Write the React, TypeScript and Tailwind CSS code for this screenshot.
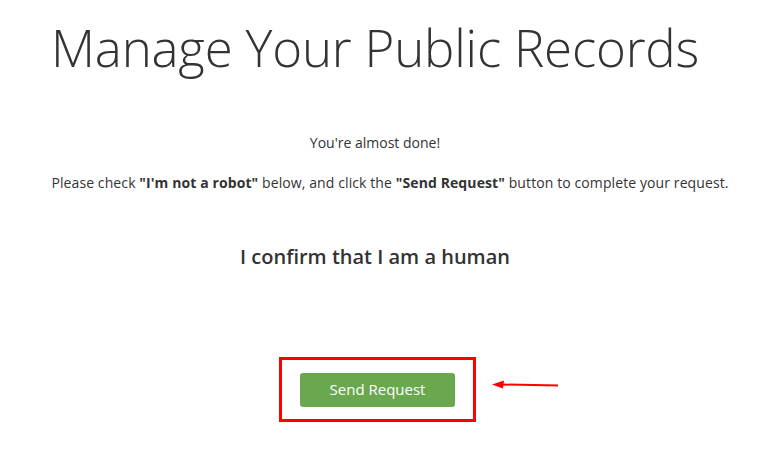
export default function App() {
  return (
    <div className="w-[750px] h-[452px] bg-white text-[#333] font-['Open_Sans',sans-serif] overflow-hidden">
      <div className="flex flex-col items-center text-center">
        {/* Titulo */}
        <h1 className="mt-[15px] text-[51px] leading-[64px] font-light tracking-[-0.2px] text-[#333]">
          Manage Your Public Records
        </h1>

        <p className="mt-[54px] text-[14px] leading-[20px]">You're almost done!</p>
        <p className="mt-[20px] pl-[30px] text-[14px] leading-[20px] tracking-[0.1px]">
          Please check <b>"I'm not a robot"</b> below, and click the <b>"Send Request"</b> button to complete your request.
        </p>

        <h3 className="mt-[50px] text-[20px] leading-[28px] font-semibold text-[#333]">I confirm that I am a human</h3>

        {/* Botão + destaque */}
        <div className="mt-[86px] ml-[5px] relative">
          <div className="w-[197px] h-[65px] border-[3px] border-[#ff0000] flex items-center justify-center">
            <button className="w-[155px] h-[34px] rounded-[3px] bg-[#6aa84f] text-white text-[15px]">
              Send Request
            </button>
          </div>
          <svg className="absolute left-[211px] top-[22px]" width="70" height="14" viewBox="0 0 70 14">
            <path d="M68 6.5 L12 5.5" stroke="#ff0000" strokeWidth="2" fill="none" />
            <path d="M2 5.5 L14 1.5 L13 9.5 Z" fill="#ff0000" />
          </svg>
        </div>
      </div>
    </div>
  );
}
